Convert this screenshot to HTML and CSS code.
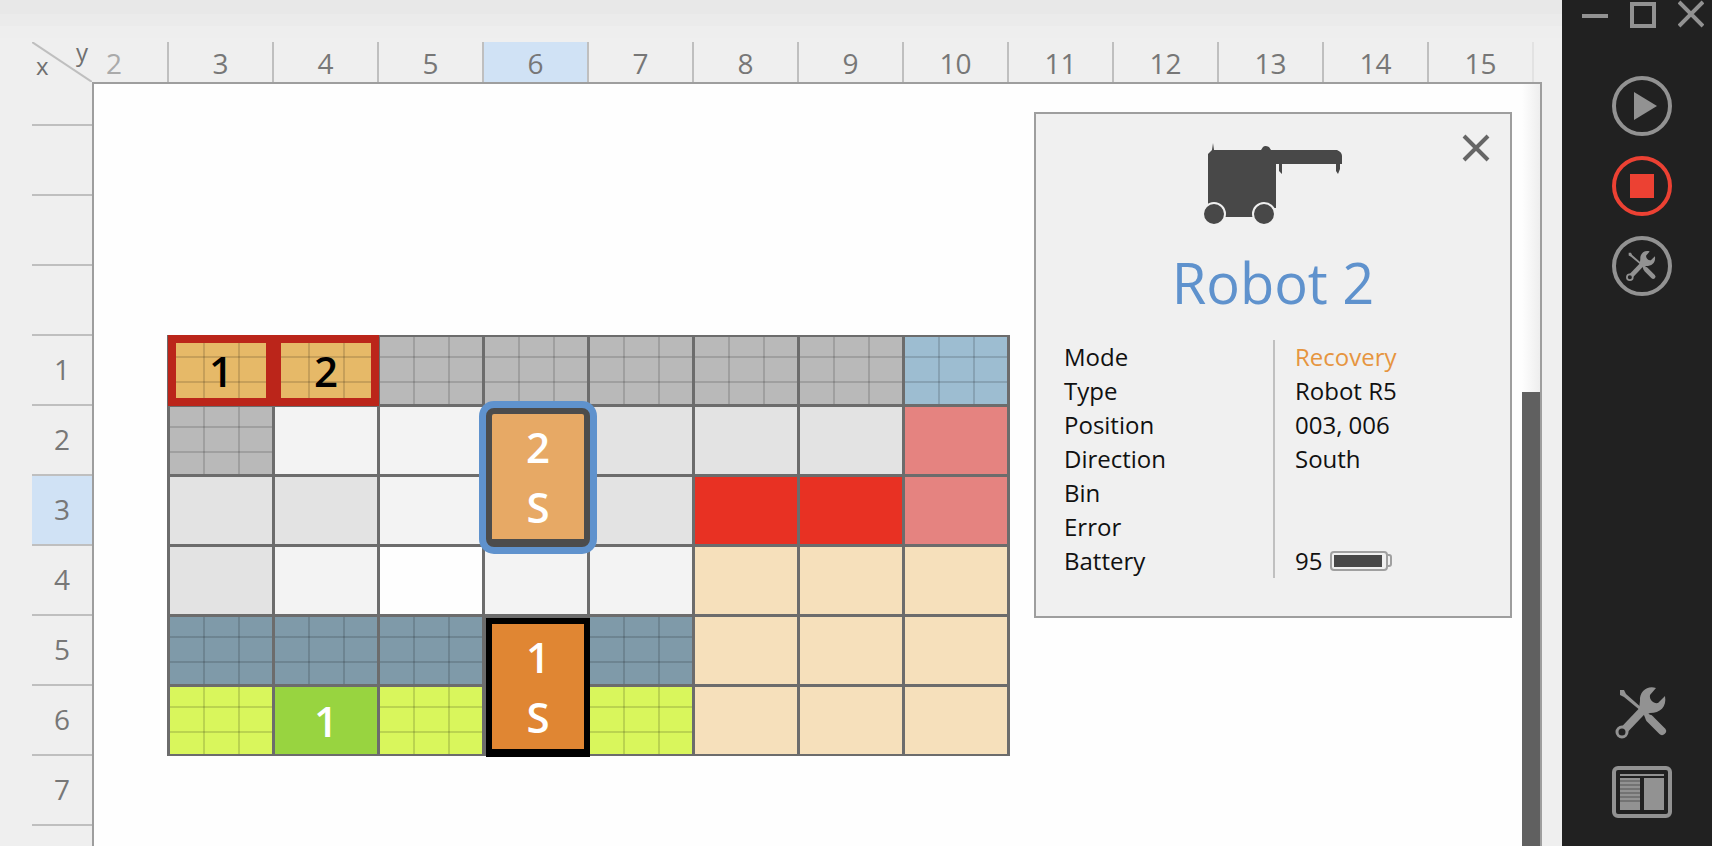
FILE: index.html
```html
<!DOCTYPE html>
<html lang="en">
<head>
    <meta charset="UTF-8">
    <meta name="viewport" content="width=device-width, initial-scale=1.0">
    <title>Robot 2</title>
    <link rel="stylesheet" href="styles.css">
</head>
<body>
    <!-- Shared icon shapes -->
    <svg class="icon-defs" aria-hidden="true">
        <symbol id="tools" viewBox="0 0 60 60">
            <path class="fill" d="M8 8 L12 8 L14 12 L31 27 L29 29 L12 15 L8 13 Z"/>
            <path class="handle" d="M38 37 L50 49"/>
            <path class="fill" d="M30 28 L33 28 L38 33 L34 38 Z"/>
            <path class="shaft" d="M13 47 L32 27"/>
            <path class="fill" d="M44 6 C36 3 27 9 28 19 L27 27 L33 33 L38 31 C48 31 55 25 53 14 L46 21 C42 22 37 18 38 13 Z"/>
            <circle class="ring" cx="10" cy="50" r="5"/>
        </symbol>
    </svg>

    <main class="board">
        <div class="corner">
            <svg viewBox="0 0 60 40" aria-hidden="true"><path d="M0 0 L60 40"/></svg>
            <span class="axis-x">x</span>
            <span class="axis-y">y</span>
        </div>

        <div class="columns">
            <span class="faded first">2</span>
            <span>3</span>
            <span>4</span>
            <span>5</span>
            <span class="selected">6</span>
            <span>7</span>
            <span>8</span>
            <span>9</span>
            <span>10</span>
            <span>11</span>
            <span>12</span>
            <span>13</span>
            <span>14</span>
            <span>15</span>
            <span class="last"></span>
        </div>

        <div class="rows">
            <span class="first"></span>
            <span></span>
            <span></span>
            <span></span>
            <span>1</span>
            <span>2</span>
            <span class="selected">3</span>
            <span>4</span>
            <span>5</span>
            <span>6</span>
            <span>7</span>
            <span></span>
        </div>

        <section class="canvas">
            <!-- Cells flow around the two robots, which take column 4 of rows 2-3 and 5-6 -->
            <div class="map">
                <div class="cell port stack">1</div>
                <div class="cell port stack">2</div>
                <div class="cell gray stack"></div>
                <div class="cell gray stack"></div>
                <div class="cell gray stack"></div>
                <div class="cell gray stack"></div>
                <div class="cell gray stack"></div>
                <div class="cell blue stack"></div>

                <div class="cell gray stack"></div>
                <div class="cell pale"></div>
                <div class="cell pale"></div>
                <div class="cell light"></div>
                <div class="cell light"></div>
                <div class="cell light"></div>
                <div class="cell pink"></div>

                <div class="cell light"></div>
                <div class="cell light"></div>
                <div class="cell pale"></div>
                <div class="cell light"></div>
                <div class="cell red"></div>
                <div class="cell red"></div>
                <div class="cell pink"></div>

                <div class="cell light"></div>
                <div class="cell pale"></div>
                <div class="cell"></div>
                <div class="cell pale"></div>
                <div class="cell pale"></div>
                <div class="cell sand"></div>
                <div class="cell sand"></div>
                <div class="cell sand"></div>

                <div class="cell slate stack"></div>
                <div class="cell slate stack"></div>
                <div class="cell slate stack"></div>
                <div class="cell slate stack"></div>
                <div class="cell sand"></div>
                <div class="cell sand"></div>
                <div class="cell sand"></div>

                <div class="cell lime stack"></div>
                <div class="cell green">1</div>
                <div class="cell lime stack"></div>
                <div class="cell lime stack"></div>
                <div class="cell sand"></div>
                <div class="cell sand"></div>
                <div class="cell sand"></div>

                <button class="robot robot-2"><span>2</span><span>S</span></button>
                <button class="robot robot-1"><span>1</span><span>S</span></button>
            </div>

            <aside class="info">
                <button class="close" aria-label="Close">
                    <svg viewBox="0 0 28 28"><path d="M2 2 L26 26 M26 2 L2 26"/></svg>
                </button>
                <svg class="robot-icon" viewBox="0 0 138 82" aria-hidden="true">
                    <path d="M8 7 L9 0 L10 7 H57 L59 4 Q61 2 65 4 L67 7 H133 Q138 9 138 13 V21 H136 V26 L134 31 L132 28 V21 H78 V26 V31 L75 28 V21 H72 V65 H70 V74 H4 V11 Z"/>
                    <circle class="wheel" cx="10" cy="71" r="11"/>
                    <circle class="wheel" cx="60" cy="71" r="11"/>
                </svg>
                <h1>Robot 2</h1>
                <dl>
                    <dt>Mode</dt><dd class="warning">Recovery</dd>
                    <dt>Type</dt><dd>Robot R5</dd>
                    <dt>Position</dt><dd>003, 006</dd>
                    <dt>Direction</dt><dd>South</dd>
                    <dt>Bin</dt><dd></dd>
                    <dt>Error</dt><dd></dd>
                    <dt>Battery</dt>
                    <dd>95
                        <svg class="battery" viewBox="0 0 62 20" aria-hidden="true">
                            <rect class="outline" x="1" y="1" width="56" height="18" rx="3"/>
                            <path class="outline" d="M57 4 H59 Q61 4 61 6 V13 Q61 15 59 15 H57"/>
                            <rect class="level" x="4" y="4" width="48" height="12"/>
                        </svg>
                    </dd>
                </dl>
            </aside>

            <div class="scrollbar"><div class="thumb"></div></div>
        </section>
    </main>

    <nav class="sidebar">
        <div class="window-buttons">
            <button aria-label="Minimize"><svg viewBox="0 0 26 28"><path d="M0 16 H26"/></svg></button>
            <button aria-label="Maximize"><svg viewBox="0 0 26 28"><rect x="2" y="4" width="22" height="22"/></svg></button>
            <button aria-label="Close window"><svg viewBox="0 0 26 28"><path d="M1 2 L25 26 M25 2 L1 26"/></svg></button>
        </div>

        <div class="actions">
            <button aria-label="Start">
                <svg viewBox="0 0 60 60"><circle cx="30" cy="30" r="28"/><path class="fill" d="M22 16 L45 30 L22 44 Z"/></svg>
            </button>
            <button class="stop" aria-label="Stop">
                <svg viewBox="0 0 60 60"><circle cx="30" cy="30" r="28"/><rect class="fill" x="18" y="18" width="24" height="24"/></svg>
            </button>
            <button aria-label="Service">
                <svg viewBox="0 0 60 60"><circle cx="30" cy="30" r="28"/><use href="#tools" x="12" y="12" width="35" height="35"/></svg>
            </button>
        </div>

        <div class="views">
            <button aria-label="Settings">
                <svg viewBox="0 0 60 60"><use href="#tools" width="60" height="60"/></svg>
            </button>
            <button aria-label="Layout">
                <svg viewBox="0 0 60 60">
                    <rect class="frame" x="2" y="6" width="56" height="48" rx="4"/>
                    <path class="fill" d="M8 12 H52 V14 H8 Z M8 16 H28 V48 H8 Z M32 16 H52 V48 H32 Z"/>
                    <path class="lines" d="M8 19 H28 M8 23 H28 M8 27 H28 M8 31 H28 M8 35 H28 M8 39 H28"/>
                </svg>
            </button>
        </div>
    </nav>
</body>
</html>
```
FILE: styles.css
```css
/* Reset and Base Styles */
* {
    margin: 0;
    padding: 0;
    box-sizing: border-box;
}

body {
    display: grid;
    grid-template-columns: 1fr 150px;
    height: 100vh;
    overflow: hidden;
    font-family: 'Open Sans', 'Noto Sans', sans-serif;
    font-size: 24px;
    color: #111;
    background: #efefef;
}

button {
    font: inherit;
    color: inherit;
    background: none;
    border: none;
    cursor: pointer;
}

svg {
    display: block;
}

.icon-defs {
    position: absolute;
    width: 0;
    height: 0;
}

/* Board */
.board {
    display: grid;
    grid-template-columns: 60px minmax(0, 1fr);
    grid-template-rows: 40px minmax(0, 1fr);
    padding: 42px 20px 0 32px;
    background: linear-gradient(#e8e8e8 14px, #ebebeb 14px, #ebebeb 26px, #eee 26px, #eee 38px, #efefef 38px);
    overflow: hidden;
}

.corner {
    position: relative;
    display: flex;
    justify-content: space-between;
    padding: 0 4px;
    line-height: 20px;
    color: #707070;
}

.corner svg {
    position: absolute;
    left: 0;
    top: 0;
    width: 60px;
    height: 40px;
    stroke: #bfbfbf;
    stroke-width: 2;
}

.axis-x {
    align-self: flex-end;
    padding-bottom: 6px;
}

/* Rulers */
.columns,
.rows {
    display: flex;
    overflow: hidden;
    font-size: 28px;
    color: #777;
}

.columns span,
.rows span {
    display: flex;
    flex: none;
    align-items: center;
    justify-content: center;
}

.columns span {
    width: 105px;
    border-left: 2px solid #bfbfbf;
    padding-top: 2px;
}

.columns .first {
    width: 75px;
    border-left: none;
    padding-right: 31px;
}

.columns .last {
    width: 10px;
    border-color: #e2e2e2;
}

.columns .faded {
    color: #aaa;
}

.rows {
    flex-direction: column;
}

.rows span {
    height: 70px;
    border-top: 2px solid #bfbfbf;
    padding-bottom: 2px;
}

.rows .first {
    height: 42px;
    border-top: none;
}

.columns .selected,
.rows .selected {
    background: #d0e2f5;
}

/* Canvas */
.canvas {
    position: relative;
    display: grid;
    grid-template-columns: minmax(0, 1fr) 18px;
    background: #fefefe;
    border: 2px solid #9e9e9e;
    border-bottom: none;
    overflow: hidden;
}

.scrollbar {
    padding-top: 308px;
    background: linear-gradient(90deg, #fefefe, #eee);
}

.thumb {
    height: 100%;
    background: #606060;
}

/* Warehouse map */
.map {
    display: grid;
    grid-template-columns: repeat(8, 102px);
    grid-template-rows: repeat(6, 67px);
    gap: 3px;
    align-self: start;
    justify-self: start;
    margin: 251px 0 0 73px;
    padding: 2px 3px;
    background: #6c6c6c;
    font-size: 42px;
    font-weight: 600;
}

.cell {
    display: flex;
    align-items: center;
    justify-content: center;
    line-height: 1;
    background-color: #fefefe;
}

/* Grid of bins drawn over a cell */
.stack {
    background-image:
        linear-gradient(90deg, transparent 33px, rgba(0, 0, 0, 0.14) 33px, rgba(0, 0, 0, 0.14) 35px, transparent 35px, transparent 68px, rgba(0, 0, 0, 0.14) 68px, rgba(0, 0, 0, 0.14) 70px, transparent 70px),
        linear-gradient(transparent 19px, rgba(0, 0, 0, 0.14) 19px, rgba(0, 0, 0, 0.14) 21px, transparent 21px, transparent 44px, rgba(0, 0, 0, 0.14) 44px, rgba(0, 0, 0, 0.14) 46px, transparent 46px);
    background-origin: border-box;
}

.gray { background-color: #b9b9b9; }
.pale { background-color: #f3f3f3; }
.light { background-color: #e3e3e3; }
.blue { background-color: #9dbdd1; }
.pink { background-color: #e58380; }
.red { background-color: #e83123; }
.sand { background-color: #f6e0bb; }
.slate { background-color: #7f9aa9; }
.lime { background-color: #d9f65c; }

.green {
    background-color: #98d440;
    color: #fff;
}

.port {
    background-color: #e6b968;
    border: 6px solid #bb251a;
    box-shadow: 0 0 0 2px #bb251a;
    color: #000;
}

.robot {
    display: flex;
    flex-direction: column;
    justify-content: center;
    grid-column: 4;
    margin: 1px -3px -3px 1px;
    border: 6px solid #000;
    border-bottom-width: 8px;
    background: #e08633;
    color: #fff;
    line-height: 60px;
    text-align: center;
    z-index: 1;
}

.robot-1 {
    grid-row: 5 / 7;
}

.robot-2 {
    grid-row: 2 / 4;
    background: #e7a965;
    border-color: #4c4c4c;
    border-radius: 8px;
    box-shadow: 0 0 0 7px #5f92cd;
}

/* Info panel */
.info {
    position: absolute;
    top: 28px;
    right: 28px;
    width: 478px;
    padding: 29px 28px 38px;
    background: #f0f0f0;
    border: 2px solid #9e9e9e;
    z-index: 2;
}

.close {
    position: absolute;
    top: 20px;
    right: 20px;
}

.close svg {
    width: 28px;
    height: 28px;
    stroke: #666;
    stroke-width: 4;
}

.robot-icon {
    width: 138px;
    height: 82px;
    margin: 0 140px;
    fill: #484848;
    overflow: visible;
}

.wheel {
    stroke: #f0f0f0;
    stroke-width: 2;
}

.info h1 {
    margin: 19px 0 20px;
    font-size: 56px;
    font-weight: 400;
    line-height: 76px;
    text-align: center;
    color: #5f92cd;
}

.info dl {
    display: grid;
    grid-template-columns: 1fr 1fr;
    line-height: 34px;
}

.info dd {
    display: flex;
    align-items: center;
    gap: 8px;
    min-height: 34px;
    padding-left: 20px;
    border-left: 2px solid #c0c0c0;
}

.info .warning {
    color: #e6953f;
}

.battery {
    width: 62px;
    height: 20px;
}

.battery .outline {
    fill: none;
    stroke: #a0a0a0;
    stroke-width: 2;
}

.battery .level {
    fill: #484848;
}

/* Sidebar */
.sidebar {
    display: flex;
    flex-direction: column;
    align-items: center;
    padding: 0 8px 24px 18px;
    background: #212121;
    color: #929292;
}

.window-buttons {
    display: flex;
    gap: 22px;
    align-self: flex-end;
}

.window-buttons svg {
    width: 26px;
    height: 28px;
    fill: none;
    stroke: currentColor;
    stroke-width: 4;
}

.actions,
.views {
    display: flex;
    flex-direction: column;
    gap: 20px;
}

.actions {
    margin-top: 48px;
}

.views {
    margin-top: auto;
}

.actions svg,
.views svg {
    width: 60px;
    height: 60px;
    fill: none;
    stroke: currentColor;
    stroke-width: 4;
}

.sidebar .stop {
    color: #ec4133;
}

.sidebar .fill {
    fill: currentColor;
    stroke: none;
}

.fill {
    fill: currentColor;
    stroke: none;
}

.handle {
    stroke-width: 8;
    stroke-linecap: round;
}

.shaft {
    stroke-width: 8;
}

.ring {
    fill: #212121;
    stroke-width: 3;
}

.frame {
    stroke-width: 4;
}

.lines {
    stroke: #555;
    stroke-width: 1;
}
```
